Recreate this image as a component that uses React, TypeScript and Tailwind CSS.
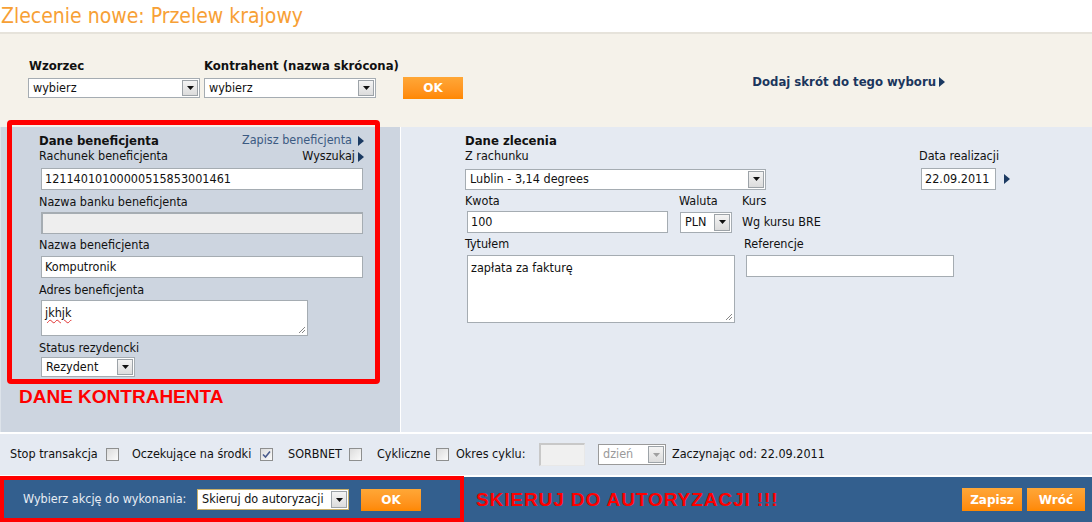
import React from 'react';

const font = { fontFamily: '"DejaVu Sans Condensed", "Liberation Sans", Arial, sans-serif' };

// strzałka w prawo przy linkach
const Tri = ({ className = '' }: { className?: string }) => (
  <svg width="6" height="10" viewBox="0 0 6 10" className={className}>
    <path d="M0 0 L6 5 L0 10 Z" fill="#1b3a62" />
  </svg>
);

const Select = ({ value, className = '', disabled = false }: { value: string; className?: string; disabled?: boolean }) => (
  <div
    className={`flex items-stretch border ${disabled ? 'border-[#9a9a9a] text-[#9a9a9a]' : 'border-[#a5acb2] text-[#111]'} bg-white ${className}`}
  >
    <div className="flex-1 pl-[4px] flex items-center overflow-hidden whitespace-nowrap">{value}</div>
    <div className="w-[16px] my-[1px] mr-[1px] border border-[#9da3a8] bg-gradient-to-b from-[#f4f4f4] to-[#dcdcdc] flex items-center justify-center">
      <svg width="7" height="4" viewBox="0 0 7 4">
        <path d="M0 0 L7 0 L3.5 4 Z" fill={disabled ? '#a0a0a0' : '#111'} />
      </svg>
    </div>
  </div>
);

const Input = ({ value = '', className = '' }: { value?: string; className?: string }) => (
  <div className={`border border-[#a5acb2] bg-white pl-[3px] flex items-center text-[#111] whitespace-nowrap ${className}`}>{value}</div>
);

const TextArea = ({ children, className = '' }: { children?: React.ReactNode; className?: string }) => (
  <div className={`relative border border-[#a5acb2] bg-white px-[3px] pt-[3px] text-[#111] ${className}`}>
    {children}
    <svg width="8" height="8" viewBox="0 0 8 8" className="absolute right-[1px] bottom-[1px]">
      <path d="M7 1 L1 7 M7 4 L4 7" stroke="#888" strokeWidth="1" />
    </svg>
  </div>
);

const Check = ({ checked = false, className = '' }: { checked?: boolean; className?: string }) => (
  <div className={`w-[13px] h-[13px] shrink-0 border border-[#8e8f8f] bg-gradient-to-br from-[#dcdcdc] to-[#fbfbfb] flex items-center justify-center ${className}`}>
    {checked && (
      <svg width="9" height="9" viewBox="0 0 9 9">
        <path d="M1 4.5 L3.5 7 L8 1.5" stroke="#4a5b8c" strokeWidth="1.6" fill="none" />
      </svg>
    )}
  </div>
);

const OrangeBtn = ({ label, className = '' }: { label: string; className?: string }) => (
  <div
    className={`flex items-center justify-center bg-gradient-to-b from-[#ffa736] to-[#ff8800] text-white font-bold text-[12px] ${className}`}
    style={{ fontFamily: '"DejaVu Sans", "Liberation Sans", sans-serif' }}
  >
    {label}
  </div>
);

const redFont = { fontFamily: '"Liberation Sans", Arial, sans-serif' };

export default function App() {
  return (
    <div className="relative w-[1092px] h-[522px] overflow-hidden bg-white text-[12.5px] text-[#111]" style={font}>
      {/* Tytuł */}
      <div className="h-[32px] flex items-center pl-[1px] text-[21px] text-[#f7a035] leading-none">
        Zlecenie nowe: Przelew krajowy
      </div>

      {/* Wzorzec / kontrahent */}
      <div className="h-[95px] bg-[#f5f2ea] border-t-2 border-[#e6e3db] flex items-start">
        <div className="flex items-end pt-[24px] pl-[28px]">
          <div className="flex flex-col">
            <div className="font-bold pl-[1px] leading-[15px] text-[13px]">Wzorzec</div>
            <Select value="wybierz" className="w-[172px] h-[20px] mt-[5px]" />
          </div>
          <div className="flex flex-col ml-[4px] w-[172px]">
            <div className="font-bold leading-[15px] text-[13px] whitespace-nowrap">Kontrahent (nazwa skrócona)</div>
            <Select value="wybierz" className="w-[172px] h-[20px] mt-[5px]" />
          </div>
          <OrangeBtn label="OK" className="w-[60px] h-[22px] ml-[27px] mb-[-1px]" />
        </div>
        <div className="ml-auto mr-[147px] mt-[38px] flex items-center gap-[3px] font-bold text-[13px] text-[#1b365d]">
          Dodaj skrót do tego wyboru
          <Tri />
        </div>
      </div>

      {/* Sekcja środkowa */}
      <div className="h-[305px] flex">
        <div className="w-[400px] bg-[#cdd5e0] border-l border-[#dde3ea] pl-[38px] pt-[6px]">
          <div className="w-[325px] flex flex-col">
            <div className="flex justify-between items-center h-[15px]">
              <span className="font-bold text-[13px]">Dane beneficjenta</span>
              <span className="flex items-center gap-[6px] text-[#3b5a82]">
                Zapisz beneficjenta <Tri />
              </span>
            </div>
            <div className="flex justify-between items-center h-[15px] mt-[1px]">
              <span>Rachunek beneficjenta</span>
              <span className="flex items-center gap-[3px]">
                Wyszukaj <Tri />
              </span>
            </div>
            <Input value="12114010100000515853001461" className="ml-[2px] w-[322px] h-[22px] mt-[4px]" />
            <div className="h-[15px] mt-[4px] leading-[15px]">Nazwa banku beneficjenta</div>
            <div className="ml-[2px] w-[322px] h-[22px] mt-[3px] border border-[#a5acb2] border-t-2 border-l-2 bg-[#eeeeee]" />
            <div className="h-[15px] mt-[3px] leading-[15px]">Nazwa beneficjenta</div>
            <Input value="Komputronik" className="ml-[2px] w-[322px] h-[22px] mt-[4px]" />
            <div className="h-[15px] mt-[4px] leading-[15px]">Adres beneficjenta</div>
            <TextArea className="ml-[2px] w-[267px] h-[36px] mt-[3px]">
              <span className="underline decoration-wavy decoration-[#e03030] decoration-1 underline-offset-2">jkhjk</span>
            </TextArea>
            <div className="h-[15px] mt-[4px] leading-[15px]">Status rezydencki</div>
            <Select value="Rezydent" className="ml-[2px] w-[94px] h-[20px] mt-[2px]" />
          </div>
          <div className="mt-[10px] ml-[-20px] text-[19px] font-bold text-[#ff0000] leading-none" style={redFont}>
            DANE KONTRAHENTA
          </div>
        </div>
        <div className="w-[1px] bg-white" />
        <div className="flex-1 bg-[#e5eaf2] pl-[64px] pt-[6px]">
          <div className="h-[15px] flex items-center font-bold text-[13px]">Dane zlecenia</div>
          <div className="h-[15px] flex items-center mt-[1px]">
            <span className="w-[454px]">Z rachunku</span>
            <span>Data realizacji</span>
          </div>
          <div className="flex items-center mt-[4px]">
            <Select value="Lublin - 3,14 degrees" className="w-[301px] h-[21px]" />
            <Input value="22.09.2011" className="ml-[155px] w-[75px] h-[22px]" />
            <Tri className="ml-[8px]" />
          </div>
          <div className="h-[15px] flex items-center mt-[4px]">
            <span className="w-[214px]">Kwota</span>
            <span className="w-[63px]">Waluta</span>
            <span>Kurs</span>
          </div>
          <div className="flex items-center mt-[2px]">
            <Input value="100" className="ml-[2px] w-[201px] h-[22px]" />
            <Select value="PLN" className="ml-[12px] w-[52px] h-[21px]" />
            <span className="ml-[10px]">Wg kursu BRE</span>
          </div>
          <div className="h-[15px] flex items-center mt-[4px]">
            <span className="w-[279px]">Tytułem</span>
            <span>Referencje</span>
          </div>
          <div className="flex items-start mt-[3px]">
            <TextArea className="ml-[2px] w-[268px] h-[68px]">zapłata za fakturę</TextArea>
            <Input className="ml-[11px] w-[208px] h-[22px]" />
          </div>
        </div>
      </div>

      {/* Opcje */}
      <div className="h-[45px] bg-[#e5eaf2] border-t-2 border-b-2 border-white flex items-center pl-[10px] whitespace-nowrap">
        <span className="w-[88px]">Stop transakcja</span>
        <Check className="ml-[8px]" />
        <span className="ml-[13px] w-[122px]">Oczekujące na środki</span>
        <Check checked className="ml-[6px]" />
        <span className="ml-[15px] w-[50px]">SORBNET</span>
        <Check className="ml-[11px]" />
        <span className="ml-[15px] w-[52px]">Cykliczne</span>
        <Check className="ml-[7px]" />
        <span className="ml-[7px] w-[72px]">Okres cyklu:</span>
        <div className="ml-[11px] w-[46px] h-[23px] border-t-2 border-l-2 border-[#c8c8c8] border-r border-b border-r-[#e8e8e8] border-b-[#e8e8e8] bg-[#f0f0f0]" />
        <Select value="dzień" disabled className="ml-[13px] w-[68px] h-[21px] bg-[#f3f3f3]" />
        <span className="ml-[6px]">Zaczynając od: 22.09.2011</span>
      </div>

      {/* Akcje */}
      <div className="h-[45px] bg-[#335f8e] flex items-center pl-[23px] pr-[7px] whitespace-nowrap">
        <span className="text-[#e8edf4] w-[169px]">Wybierz akcję do wykonania:</span>
        <Select value="Skieruj do autoryzacji" className="ml-[5px] w-[152px] h-[21px] border-[#c9b06a]" />
        <OrangeBtn label="OK" className="ml-[12px] w-[60px] h-[22px]" />
        <span className="ml-[55px] text-[19px] tracking-[0.9px] font-bold text-[#ff0000] leading-none" style={redFont}>
          SKIERUJ DO AUTORYZACJI !!!
        </span>
        <OrangeBtn label="Zapisz" className="ml-auto w-[60px] h-[23px]" />
        <OrangeBtn label="Wróć" className="ml-[5px] w-[58px] h-[23px]" />
      </div>

      {/* Czerwone ramki (adnotacje) */}
      <div className="absolute left-[7px] top-[120px] w-[373px] h-[264px] border-[5px] border-[#ff0000] rounded-[4px] pointer-events-none" />
      <div className="absolute left-[0px] top-[476px] w-[464px] h-[46px] border-[4px] border-[#ff0000] pointer-events-none" />
    </div>
  );
}
